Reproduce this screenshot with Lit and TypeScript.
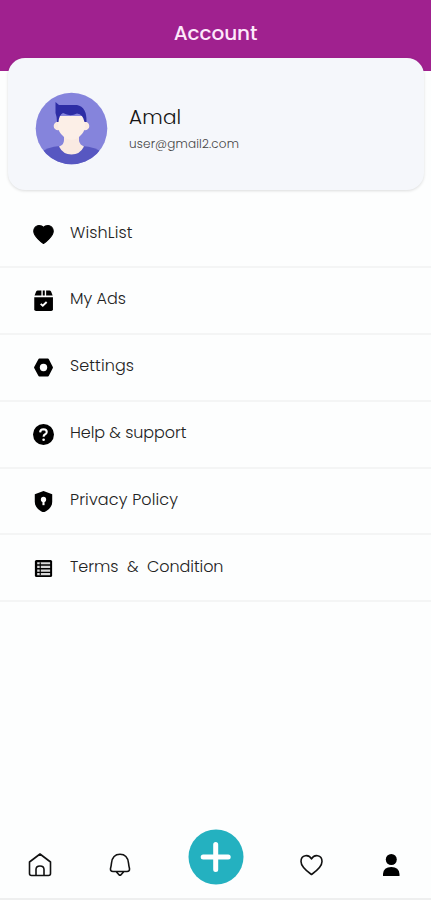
import { LitElement, html, css, svg } from "lit";
import { customElement } from "lit/decorators.js";

const icons = {
  heart: svg`<path d="M10 18.600 C8.500 17.600 0.700 11.500 0.700 6.800 C0.700 3.500 3.100 1.500 5.700 1.500 C7.800 1.500 9.200 2.200 10 3.200 C10.800 2.200 12.200 1.500 14.300 1.500 C16.900 1.500 19.300 3.500 19.300 6.800 C19.300 11.500 11.500 17.600 10 18.600Z" stroke="#000" stroke-linejoin="round"/>`,
  box: svg`<path d="M4.500 0.500H8V5.300H1.500L3 1.500Q3.500 0.500 4.500 0.500Z M9.300 0.500H11.200V5.300H9.300Z M12.500 0.500H15.700Q16.700 0.500 17.200 1.500L18.700 5.300H12.500Z"/><path d="M1.200 6.800H19V18.300Q19 20 17.300 20H2.900Q1.200 20 1.200 18.300Z"/><path d="M7.300 13.200L9.300 15L13 11.400" fill="none" stroke="#fff" stroke-width="1.800"/>`,
  nut: svg`<path d="M6 2.500H14.200L18 10L14.200 17.500H6L2 10Z" stroke="#000" stroke-width="2" stroke-linejoin="round"/><circle cx="10" cy="10" r="3.500" fill="#fff"/>`,
  help: svg`<circle cx="10" cy="10" r="10"/><path d="M6.800 8Q6.900 5 10 5Q13.100 5.100 13.100 7.600Q13 9.200 11.300 10Q10.100 10.700 10.100 12.200" fill="none" stroke="#fff" stroke-width="2"/><circle cx="10.100" cy="15" r="1.250" fill="#fff"/>`,
  shield: svg`<path d="M10 0L18.300 3V10.500C18.300 15.500 14 18.500 10 20.500C6 18.500 1.700 15.500 1.700 10.500V3Z"/><circle cx="10" cy="8" r="2.500" fill="#fff"/><path d="M9 8H11V13.500H9Z" fill="#fff"/>`,
  list: svg`<rect x="1.800" y="1.800" width="16.400" height="16.400" rx="1.500"/><path d="M4 5H16.300M4 8.500H16.300M4 12H16.300M4 15.300H16.300" stroke="#d8d8d8" stroke-width="2.100" /><path d="M6.900 4V16.400" stroke="#000" stroke-width="1.100"/>`,
};

const items = [
  { label: "WishList", icon: icons.heart, cls: "wish" },
  { label: "My Ads", icon: icons.box, cls: "ads" },
  { label: "Settings", icon: icons.nut, cls: "settings" },
  { label: "Help & support", icon: icons.help, cls: "help" },
  { label: "Privacy Policy", icon: icons.shield, cls: "privacy" },
  { label: "Terms  &  Condition", icon: icons.list, cls: "terms" },
];

@customElement("app-root")
export class AppRoot extends LitElement {
  static styles = css`
    :host {
      display: flex;
      flex-direction: column;
      box-sizing: border-box;
      height: 900px;
      background: #fdfefe;
      font-family: Poppins, Inter, "Open Sans", sans-serif;
      font-weight: 300;
      color: #222;
      overflow: hidden;
    }
    svg { display: block; flex: none; }
    header {
      height: 71px;
      flex: none;
      box-sizing: border-box;
      padding-top: 20px;
      background: #a0218f;
      color: #fde9fb;
      text-align: center;
      font-size: 20px;
      line-height: 27px;
      font-weight: 500;
    }
    .title { letter-spacing: -0.05px; }
    .card {
      display: flex;
      align-items: center;
      flex: none;
      height: 132px;
      margin: -13px 7px 0 8px;
      padding: 8px 0 0 27px;
      gap: 21px;
      box-sizing: border-box;
      border-radius: 17px;
      background: #f5f7fb;
      box-shadow: 0 1px 3px #0002;
    }
    .who { display: flex; flex-direction: column; padding-top: 1px; }
    .name { font-size: 20px; line-height: 28px; color: #151515; letter-spacing: 0.2px; }
    .mail { font-size: 12px; line-height: 20px; margin-top: 3px; color: #444; letter-spacing: 0.15px; }
    .menu { padding-top: 11px; flex: none; }
    .row {
      display: flex;
      align-items: center;
      height: 66.9px;
      box-sizing: border-box;
      border-bottom: 2px solid #f4f5f5;
      padding: 1.2px 0 0 33px;
      gap: 16px;
    }
    .row svg { fill: #000; }
    .label { font-size: 16px; line-height: 24px; white-space: pre; margin-top: -3px; }
    .wish, .privacy { letter-spacing: 0.15px; }
    .settings { letter-spacing: 0.1px; }
    .help, .terms { letter-spacing: -0.06px; }
    nav {
      display: flex;
      align-items: center;
      justify-content: space-between;
      height: 80px;
      flex: none;
      margin-top: auto;
      box-sizing: border-box;
      padding: 5px 27px 0;
      border-bottom: 2px solid #eeefef;
    }
    .line { fill: none; stroke: #111; stroke-width: 1.600; stroke-linejoin: round; stroke-linecap: round; }
    .tab { margin-top: 7px; }
    .add { margin-top: -9px; }
  `;

  render() {
    return html`
      <header><span class="title">Account</span></header>
      <section class="card">
        <svg width="73" height="73" viewBox="0 0 73 73">
          <defs><clipPath id="face"><circle cx="36.500" cy="36.500" r="35.800" /></clipPath></defs>
          <g clip-path="url(#face)">
            <rect width="73" height="73" fill="#8584dc" />
            <path d="M5 61Q12 55 25 54H47Q61 55 68 61V73H5Z" fill="#5757c1" />
            <path d="M29 42H44V49Q45 53 49 54.500Q45 62.500 36.500 62.500Q28 62.500 24 54.500Q29 53 29 48Z" fill="#faeae2" />
            <circle cx="23" cy="34" r="4.300" fill="#faeae2" /><circle cx="50" cy="34" r="4.300" fill="#faeae2" />
            <path d="M23 24H50V34Q50 40 44 45Q36.500 51 29 45Q23 40 23 34Z" fill="#fcefe7" />
            <path d="M22 30Q22 25 20.500 21V10L24 13H42Q52 15 51.500 30H49.500Q48 22 42 21.500Q35 25 28 21Q24 23 23.500 30Z" fill="#2d2da5" />
          </g>
        </svg>
        <div class="who"><span class="name">Amal</span><span class="mail">user@gmail2.com</span></div>
      </section>
      <main class="menu">
        ${items.map((i) => html`<div class="row">
          <svg width="21" height="21" viewBox="0 0 20 20">${i.icon}</svg>
          <span class="label ${i.cls}">${i.label}</span>
        </div>`)}
      </main>
      <nav>
        <svg class="line tab" width="26" height="26" viewBox="0 0 26 26"><path d="M2.500 10L13 2L23.500 10V21.500Q23.500 23.500 21.500 23.500H4.500Q2.500 23.500 2.500 21.500Z M9 23V17.500Q9 14 13 14Q17 14 17 17.500V23"/></svg>
        <svg class="line tab" width="24" height="26" viewBox="0 0 24 26"><path d="M12 2.200C6.500 2.200 4 6.500 3.500 11Q3.200 14 2.500 16.500Q2.200 19.500 5 19.500H19Q21.800 19.500 21.500 16.500Q20.800 14 20.500 11C20 6.500 17.500 2.200 12 2.200Z M8.500 20L11 22.800Q12 23.500 13 22.800L15.500 20"/></svg>
        <svg class="add" width="56" height="56" viewBox="0 0 56 56"><circle cx="28" cy="28" r="27.500" fill="#24b1c0"/><path d="M27.700 15.500V40.500M15.200 28H40.200" stroke="#fff" stroke-width="5" stroke-linecap="round"/></svg>
        <svg class="line tab" width="24" height="24" viewBox="0 0 24 24"><path d="M12.500 21.500C10.500 20 2 14.500 2 8.500C2 1.500 10 1 12.500 6C15 1 23 1.500 23 8.500C23 14.500 14.500 20 12.500 21.500Z"/></svg>
        <svg class="tab" width="26" height="26" viewBox="0 0 26 26"><circle cx="13.300" cy="7.500" r="5.500"/><path d="M5 24V22Q5.500 15 13.300 15Q21 15 21.500 22V24Z"/></svg>
      </nav>
    `;
  }
}
